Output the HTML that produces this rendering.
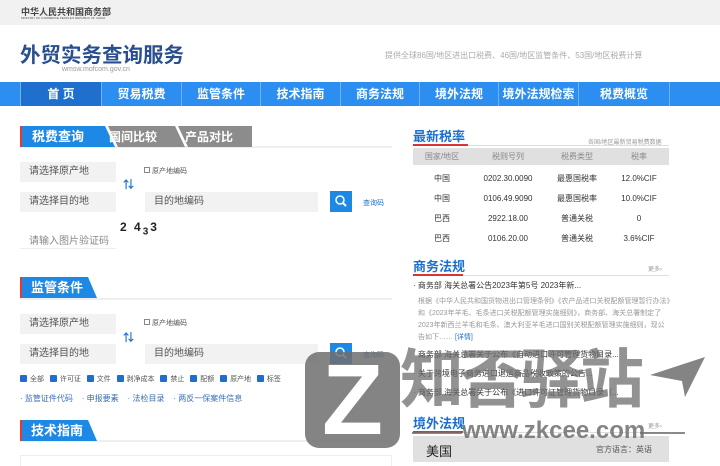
<!DOCTYPE html>
<html><head><meta charset="utf-8"><style>
*{margin:0;padding:0;box-sizing:border-box}
body{width:720px;height:466px;overflow:hidden;background:#fff;font-family:"Liberation Sans","Noto Sans CJK SC",sans-serif;position:relative;color:#333}
.a{position:absolute;white-space:nowrap}
.inp{position:absolute;background:#f2f2f2;font-size:10px;color:#555;padding-left:9px;line-height:20px;height:20px}
.tab{position:absolute;height:20px;color:#fff;font-weight:bold;font-size:13px;line-height:20px}
.nav div{position:absolute;top:0;height:24px;line-height:24px;color:#fff;font-weight:bold;font-size:12px;text-align:center;border-left:1px solid #6fb2f5}
.sec{position:absolute;font-size:13px;font-weight:bold;color:#1a6fd1}
.cb{display:inline-block;width:7px;height:7px;background:#1a6fd1;margin-right:3px;vertical-align:-1px;border-radius:1px}
.btn{position:absolute;width:22px;height:21px;background:#1e88e5}
</style></head><body>
<div class="a" style="left:0;top:0;width:720px;height:25px;background:#f1f1f1"></div>
<div class="a" style="left:21px;top:5px;font-size:9px;font-weight:bold;color:#444">中华人民共和国商务部</div>
<div class="a" style="left:21px;top:16px;font-size:3px;color:#555">MINISTRY OF COMMERCE PEOPLE'S REPUBLIC OF CHINA</div>
<div class="a" style="left:20px;top:38px;font-size:20.5px;font-weight:bold;color:#2a4f8f">外贸实务查询服务</div>
<div class="a" style="left:62px;top:66px;font-size:7px;color:#999">wmsw.mofcom.gov.cn</div>
<div class="a" style="left:385px;top:50px;font-size:8px;color:#aaa">提供全球86国/地区进出口税费、46国/地区监管条件、53国/地区税费计算</div>
<div class="nav a" style="left:0;top:82px;width:720px;height:24px;background:#2b8ef0">
<div style="left:20px;width:81px;background:#1f6fcf">首 页</div>
<div style="left:101px;width:80px">贸易税费</div>
<div style="left:181px;width:79px">监管条件</div>
<div style="left:260px;width:80px">技术指南</div>
<div style="left:340px;width:79px">商务法规</div>
<div style="left:419px;width:79px">境外法规</div>
<div style="left:498px;width:80px">境外法规检索</div>
<div style="left:578px;width:91px">税费概览</div>
<div style="left:669px;width:51px"></div>
</div>
<!-- tabs -->
<div class="a" style="left:20px;top:146px;width:372px;height:2px;background:#eee"></div>
<svg class="a" style="left:20px;top:126px" width="232" height="21"><polygon points="0,0 85,0 95,21 0,21" fill="#1e88e5"/><polygon points="88,0 155,0 165,21 98,21" fill="#8c8c8c"/><polygon points="158,0 238,0 248,21 168,21" fill="#8c8c8c"/><rect x="0" y="0" width="2" height="21" fill="#e53935"/></svg>
<div class="tab" style="left:32px;top:127px">税费查询</div>
<div class="tab" style="left:109px;top:127px;font-size:12px">国间比较</div>
<div class="tab" style="left:185px;top:127px;font-size:12px">产品对比</div>
<div class="inp" style="left:20px;top:162px;width:96px">请选择原产地</div>
<div class="inp" style="left:20px;top:192px;width:96px">请选择目的地</div>
<div class="a" style="left:123px;top:176px;font-size:11px;color:#1a6fd1;font-weight:bold">⇅</div>
<div class="a" style="left:144px;top:166px;font-size:7px;color:#555"><span style="display:inline-block;width:6px;height:6px;border:1px solid #888;margin-right:2px"></span>原产地编码</div>
<div class="inp" style="left:145px;top:192px;width:173px">目的地编码</div>
<div class="btn" style="left:330px;top:191px"><svg width="22" height="21"><circle cx="10" cy="9" r="4" fill="none" stroke="#fff" stroke-width="1.5"/><line x1="13" y1="12" x2="16" y2="15" stroke="#fff" stroke-width="2"/></svg></div>
<div class="a" style="left:363px;top:198px;font-size:7px;color:#1a6fd1">查询码</div>
<div class="a" style="left:29px;top:232px;font-size:10px;color:#888">请输入图片验证码</div>
<div class="a" style="left:20px;top:248px;width:96px;height:1px;background:#eee"></div>
<div class="a" style="left:120px;top:220px;font-size:12px;font-weight:bold;color:#222;letter-spacing:2px">2 4<sub>3</sub>3</div>
<!-- 监管条件 -->
<div class="a" style="left:20px;top:298px;width:372px;height:2px;background:#eee"></div>
<svg class="a" style="left:20px;top:277px" width="80" height="21"><polygon points="0,0 68,0 77,21 0,21" fill="#1e88e5"/><rect width="2" height="21" fill="#e53935"/></svg>
<div class="tab" style="left:31px;top:278px">监管条件</div>
<div class="inp" style="left:20px;top:314px;width:96px">请选择原产地</div>
<div class="inp" style="left:20px;top:344px;width:96px">请选择目的地</div>
<div class="a" style="left:123px;top:329px;font-size:11px;color:#1a6fd1;font-weight:bold">⇅</div>
<div class="a" style="left:144px;top:318px;font-size:7px;color:#555"><span style="display:inline-block;width:6px;height:6px;border:1px solid #888;margin-right:2px"></span>原产地编码</div>
<div class="inp" style="left:145px;top:344px;width:173px">目的地编码</div>
<div class="btn" style="left:330px;top:343px"><svg width="22" height="21"><circle cx="10" cy="9" r="4" fill="none" stroke="#fff" stroke-width="1.5"/><line x1="13" y1="12" x2="16" y2="15" stroke="#fff" stroke-width="2"/></svg></div>
<div class="a" style="left:363px;top:350px;font-size:7px;color:#1a6fd1">查询码</div>
<div class="a" style="left:20px;top:374px;font-size:7px;color:#555"><span class="cb"></span>全部&nbsp;&nbsp;&nbsp;<span class="cb"></span>许可证&nbsp;&nbsp;&nbsp;<span class="cb"></span>文件&nbsp;&nbsp;&nbsp;<span class="cb"></span>剥净成本&nbsp;&nbsp;&nbsp;<span class="cb"></span>禁止&nbsp;&nbsp;&nbsp;<span class="cb"></span>配额&nbsp;&nbsp;&nbsp;<span class="cb"></span>原产地&nbsp;&nbsp;&nbsp;<span class="cb"></span>标签</div>
<div class="a" style="left:20px;top:393px;font-size:8px;color:#3a6fb5">· 监管证件代码&nbsp;&nbsp;&nbsp;&nbsp;· 申报要素&nbsp;&nbsp;&nbsp;&nbsp;· 法检目录&nbsp;&nbsp;&nbsp;&nbsp;· 两反一保案件信息</div>
<div class="a" style="left:20px;top:440px;width:372px;height:2px;background:#eee"></div>
<svg class="a" style="left:20px;top:420px" width="80" height="21"><polygon points="0,0 68,0 77,21 0,21" fill="#1e88e5"/><rect width="2" height="21" fill="#e53935"/></svg>
<div class="tab" style="left:31px;top:421px">技术指南</div>
<div class="a" style="left:20px;top:455px;width:372px;height:11px;border:1px solid #eee;border-bottom:none"></div>
<!-- right column -->
<div class="sec" style="left:413px;top:126px">最新税率</div>
<div class="a" style="left:413px;top:144px;width:55px;height:2px;background:#d33"></div>
<div class="a" style="left:468px;top:145px;width:201px;height:1px;background:#ddd"></div>
<div class="a" style="left:588px;top:137px;font-size:6px;color:#999">各国/地区最新贸易税费数据</div>
<div class="a" style="left:413px;top:148px;width:256px;height:17px;background:#e0e0e0"></div>
<div class="a" style="left:413px;top:151px;width:256px;font-size:8px;color:#888;display:flex"><span style="width:58px;text-align:center">国家/地区</span><span style="width:74px;text-align:center">税则号列</span><span style="width:64px;text-align:center">税费类型</span><span style="width:60px;text-align:center">税率</span></div>
<div class="a" style="left:413px;top:169px;width:256px;font-size:8px;color:#333;line-height:20px">
<div style="display:flex"><span style="width:58px;text-align:center">中国</span><span style="width:74px;text-align:center">0202.30.0090</span><span style="width:64px;text-align:center">最惠国税率</span><span style="width:60px;text-align:center">12.0%CIF</span></div>
<div style="display:flex"><span style="width:58px;text-align:center">中国</span><span style="width:74px;text-align:center">0106.49.9090</span><span style="width:64px;text-align:center">最惠国税率</span><span style="width:60px;text-align:center">10.0%CIF</span></div>
<div style="display:flex"><span style="width:58px;text-align:center">巴西</span><span style="width:74px;text-align:center">2922.18.00</span><span style="width:64px;text-align:center">普通关税</span><span style="width:60px;text-align:center">0</span></div>
<div style="display:flex"><span style="width:58px;text-align:center">巴西</span><span style="width:74px;text-align:center">0106.20.00</span><span style="width:64px;text-align:center">普通关税</span><span style="width:60px;text-align:center">3.6%CIF</span></div>
</div>
<div class="sec" style="left:413px;top:256px">商务法规</div>
<div class="a" style="left:413px;top:274px;width:50px;height:2px;background:#d33"></div>
<div class="a" style="left:463px;top:275px;width:206px;height:1px;background:#ddd"></div>
<div class="a" style="left:648px;top:264px;font-size:6px;color:#999">更多›</div>
<div class="a" style="left:413px;top:280px;font-size:8px;color:#333">· 商务部 海关总署公告2023年第5号 2023年新...</div>
<div class="a" style="left:418px;top:296px;width:252px;font-size:7px;color:#999;line-height:12px;white-space:normal">根据《中华人民共和国货物进出口管理条例》《农产品进口关税配额管理暂行办法》和《2023年羊毛、毛条进口关税配额管理实施细则》，商务部、海关总署制定了2023年新西兰羊毛和毛条、澳大利亚羊毛进口国别关税配额管理实施细则，现公告如下…… <span style="color:#1a6fd1">[详情]</span></div>
<div class="a" style="left:413px;top:349px;font-size:8px;color:#333">· 商务部 海关总署关于公布《自动进口许可管理货物目录...</div>
<div class="a" style="left:413px;top:368px;font-size:8px;color:#333">· 关于跨境电子商务进口退运商品税收政策的公告...</div>
<div class="a" style="left:413px;top:387px;font-size:8px;color:#333">· 商务部 海关总署关于公布《进口许可证管理货物目录（...</div>
<div class="sec" style="left:413px;top:413px">境外法规</div>
<div class="a" style="left:413px;top:431px;width:50px;height:2px;background:#d33"></div>
<div class="a" style="left:463px;top:432px;width:206px;height:1px;background:#ddd"></div>
<div class="a" style="left:648px;top:421px;font-size:6px;color:#999">更多›</div>
<div class="a" style="left:413px;top:436px;width:256px;height:26px;background:#e0e0e0"></div>
<div class="a" style="left:426px;top:441px;font-size:13px;color:#222">美国</div>
<div class="a" style="left:596px;top:444px;font-size:8px;color:#555">官方语言：英语</div>
<!-- watermark -->
<div class="a" style="left:305px;top:352px;width:95px;height:96px;background:rgba(110,110,110,.85);border-radius:14px"></div>
<div class="a" style="left:322px;top:355px;font-size:100px;font-weight:bold;color:#fff;line-height:90px;font-family:'Liberation Sans',sans-serif">Z</div>
<div class="a" style="left:400px;top:345px;font-size:64px;font-weight:bold;color:rgba(110,110,110,.75);letter-spacing:-4px;line-height:70px">知否驿站</div>
<div class="a" style="left:462px;top:417px;font-size:24px;font-weight:bold;color:rgba(110,110,110,.85)">www.zkcee.com</div>
<div class="a" style="left:412px;top:432px;width:50px;height:2px;background:rgba(110,110,110,.8)"></div>
<div class="a" style="left:640px;top:432px;width:45px;height:2px;background:rgba(110,110,110,.8)"></div>
<svg class="a" style="left:650px;top:355px" width="55" height="45"><polygon points="0,20 55,2 35,42 32,26" fill="rgba(110,110,110,.85)"/></svg>
</body></html>
